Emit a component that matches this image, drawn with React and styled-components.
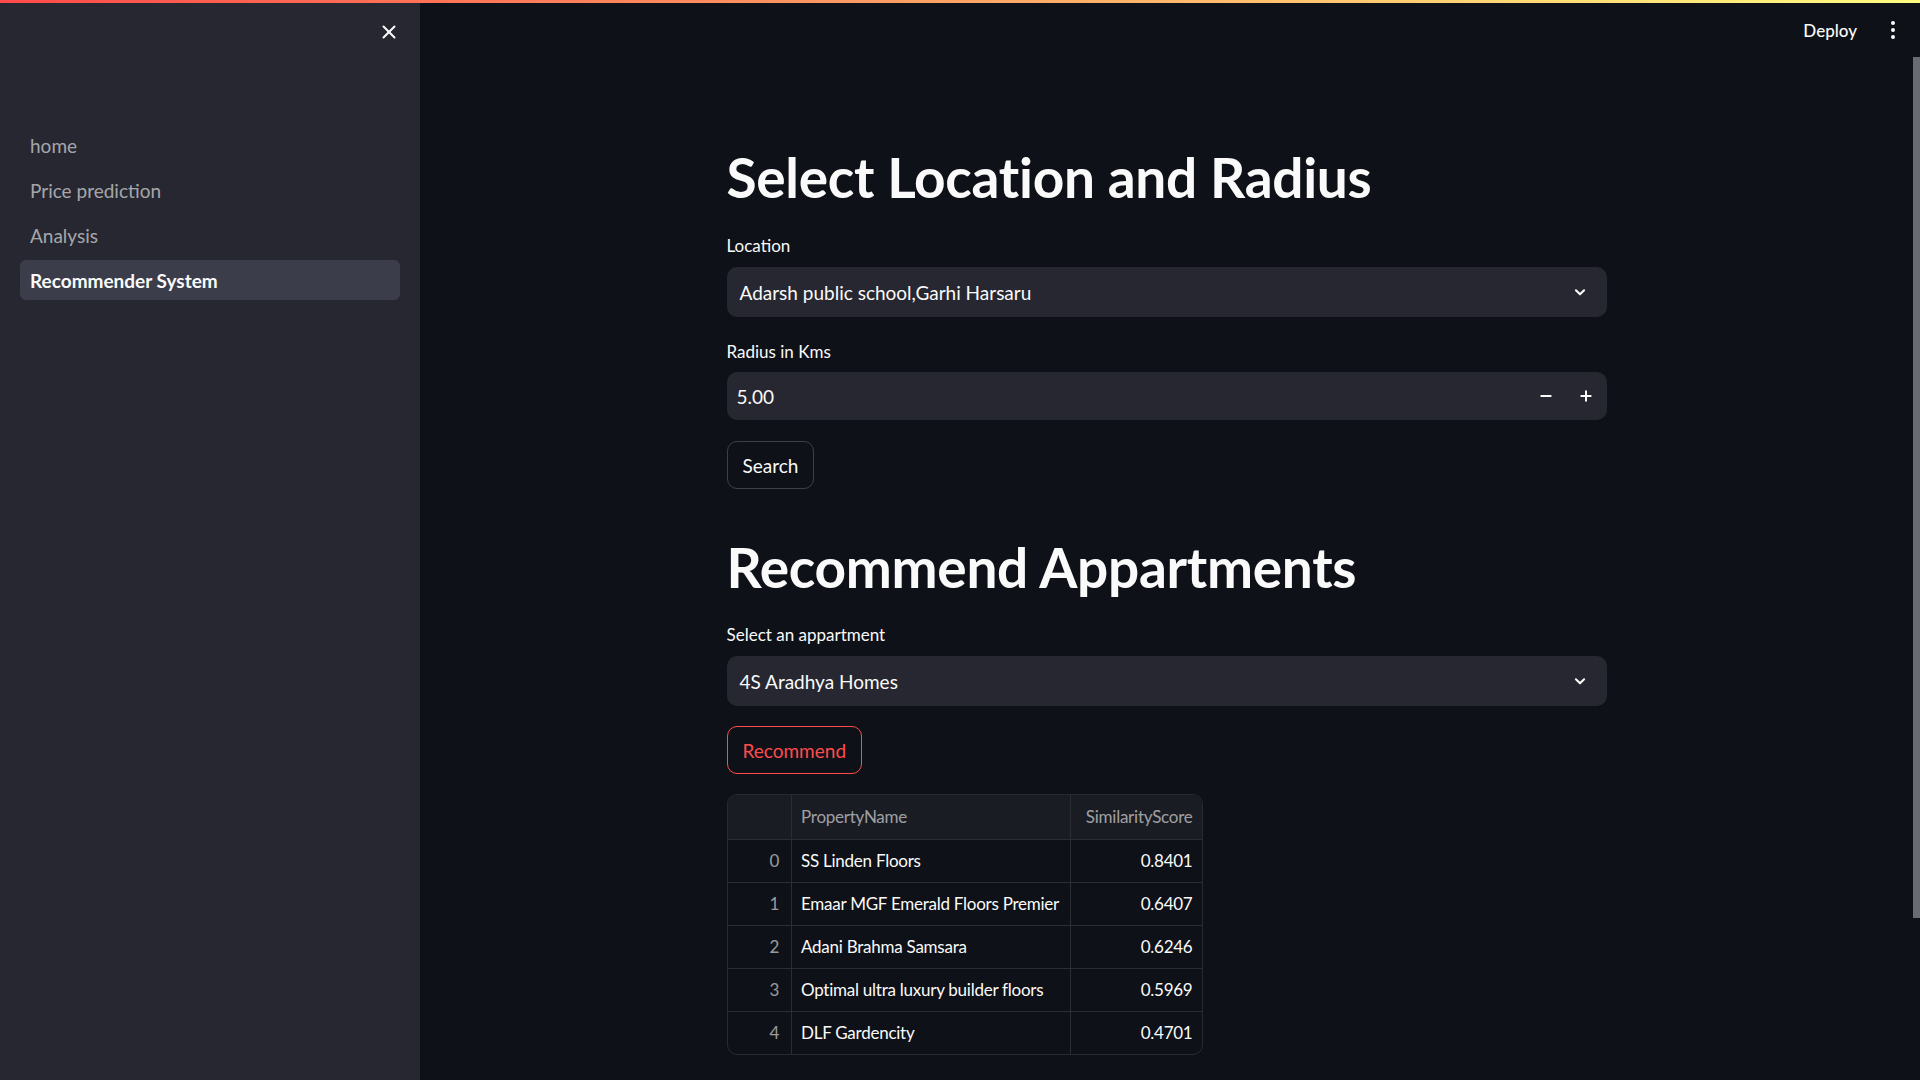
import React from 'react';
import styled, { createGlobalStyle } from 'styled-components';
import { X, Minus, Plus } from 'lucide-react';

const GlobalStyle = createGlobalStyle`
  html, body {
    margin: 0;
    padding: 0;
    background: #0e1117;
    color: #fafafa;
    font-family: "Lato", "Noto Sans", sans-serif;
  }
  * { box-sizing: border-box; }
`;

const Page = styled.div`
  position: relative;
  display: flex;
  width: 100%;
  height: 100vh;
  overflow: hidden;
`;

const Decoration = styled.div`
  position: absolute;
  top: 0;
  left: 0;
  right: 0;
  height: 3px;
  background: linear-gradient(90deg, #ff4b4b, #fffd80);
  z-index: 5;
`;

const Sidebar = styled.aside`
  width: 420px;
  flex-shrink: 0;
  background: #262730;
  padding: 0 20px;
`;

const SidebarTop = styled.div`
  height: 125px;
  display: flex;
  justify-content: flex-end;
  align-items: flex-start;
  padding: 21px 0 0 0;
  color: #fafafa;
`;

const NavList = styled.nav`
  display: flex;
  flex-direction: column;
  gap: 5px;
`;

const NavItem = styled.a`
  height: 40px;
  display: flex;
  align-items: center;
  padding-left: 10px;
  border-radius: 6px;
  font-size: 19px;
  font-weight: ${p => (p.active ? 700 : 400)};
  color: ${p => (p.active ? '#fafafa' : 'rgba(250,250,250,0.62)')};
  background: ${p => (p.active ? '#3b3d4a' : 'transparent')};
  cursor: pointer;
`;

const Main = styled.main`
  flex: 1;
  display: flex;
  min-width: 0;
`;

const MainColumn = styled.div`
  flex: 1;
  display: flex;
  flex-direction: column;
`;

const Header = styled.header`
  height: 60px;
  display: flex;
  justify-content: flex-end;
  align-items: center;
  gap: 34px;
  padding: 0 18px 0 0;
`;

const DeployLink = styled.span`
  font-size: 17px;
  font-weight: 500;
  color: #fafafa;
`;

const Dots = styled.div`
  display: flex;
  flex-direction: column;
  gap: 3px;
  span {
    width: 4px;
    height: 4px;
    border-radius: 50%;
    background: #fafafa;
  }
`;

const Block = styled.div`
  width: 920px;
  margin: 0 auto;
  padding: 0 20px;
  display: flex;
  flex-direction: column;
`;

const Title = styled.h1`
  margin: ${p => p.top}px 0 0;
  font-size: 55px;
  font-weight: 700;
  line-height: 66px;
  letter-spacing: -0.3px;
  color: #fafafa;
`;

const Label = styled.label`
  display: block;
  margin-top: ${p => p.top}px;
  font-size: 17px;
  line-height: 22px;
  color: #fafafa;
`;

const SelectBox = styled.div`
  margin-top: 10px;
  height: 50px;
  border-radius: 10px;
  background: #262730;
  display: flex;
  align-items: center;
  justify-content: space-between;
  padding: 0 20px 0 13px;
  font-size: 19px;
  color: #fafafa;
`;

const NumberBox = styled.div`
  margin-top: 9px;
  height: 48px;
  border-radius: 10px;
  background: #262730;
  display: flex;
  align-items: center;
  padding: 0 1px 0 10px;
  font-size: 19px;
`;

const NumberValue = styled.span`
  flex: 1;
`;

const StepButton = styled.span`
  width: 40px;
  height: 100%;
  display: flex;
  align-items: center;
  justify-content: center;
  color: #fafafa;
`;

const Button = styled.button`
  align-self: flex-start;
  margin-top: ${p => p.top}px;
  height: 48px;
  padding: 0 15px;
  border-radius: 10px;
  background: transparent;
  border: 1px solid ${p => (p.primary ? '#ff4b4b' : 'rgba(250,250,250,0.2)')};
  color: ${p => (p.primary ? '#ff4b4b' : '#fafafa')};
  font-family: inherit;
  font-size: 19px;
`;

const TableWrap = styled.div`
  align-self: flex-start;
  margin-top: 20px;
  border: 1px solid #262a33;
  border-radius: 10px;
  overflow: hidden;
`;

const Table = styled.table`
  border-collapse: collapse;
  font-size: 17px;
  letter-spacing: -0.25px;
  white-space: nowrap;
`;

const Th = styled.th`
  height: 44px;
  padding: 0 9px;
  background: #1a1c24;
  font-weight: 400;
  color: rgba(250,250,250,0.6);
  text-align: ${p => p.align || 'left'};
  width: ${p => p.w}px;
  border-left: ${p => (p.first ? 'none' : '1px solid #2b2d36')};
  border-bottom: 1px solid #2b2d36;
`;

const Td = styled.td`
  height: 43px;
  padding: 0 9px 0 9px;
  text-align: ${p => p.align || 'left'};
  color: ${p => (p.muted ? 'rgba(250,250,250,0.6)' : '#fafafa')};
  border-left: ${p => (p.first ? 'none' : '1px solid #2b2d36')};
  border-top: 1px solid #2b2d36;
  padding-right: ${p => (p.first ? 12 : 9)}px;
`;

const ScrollTrack = styled.div`
  width: 7px;
  flex-shrink: 0;
  padding-top: 57px;
`;

const ScrollThumb = styled.div`
  height: 861px;
  background: #6a6b70;
`;

const rows = [
  ['SS Linden Floors', '0.8401'],
  ['Emaar MGF Emerald Floors Premier', '0.6407'],
  ['Adani Brahma Samsara', '0.6246'],
  ['Optimal ultra luxury builder floors', '0.5969'],
  ['DLF Gardencity', '0.4701'],
];

const Chevron = () => (
  <svg width="14" height="14" viewBox="0 0 24 24" fill="none" stroke="#fafafa" strokeWidth="3.5" strokeLinecap="round" strokeLinejoin="round">
    <path d="M5 9l7 7 7-7" />
  </svg>
);

const App = () => {
  return (
    <>
      <GlobalStyle />
      <Page>
        <Decoration />
        <Sidebar>
          <SidebarTop>
            <X size={22} strokeWidth={2.2} />
          </SidebarTop>
          <NavList>
            <NavItem>home</NavItem>
            <NavItem>Price prediction</NavItem>
            <NavItem>Analysis</NavItem>
            <NavItem active>Recommender System</NavItem>
          </NavList>
        </Sidebar>
        <Main>
          <MainColumn>
            <Header>
              <DeployLink>Deploy</DeployLink>
              <Dots><span /><span /><span /></Dots>
            </Header>
            <Block>
              <Title top={84}>Select Location and Radius</Title>
              <Label top={25}>Location</Label>
              <SelectBox>
                <span>Adarsh public school,Garhi Harsaru</span>
                <Chevron />
              </SelectBox>
              <Label top={24}>Radius in Kms</Label>
              <NumberBox>
                <NumberValue>5.00</NumberValue>
                <StepButton><Minus size={16} strokeWidth={3} /></StepButton>
                <StepButton><Plus size={16} strokeWidth={3} /></StepButton>
              </NumberBox>
              <Button top={21}>Search</Button>
              <Title top={45}>Recommend Appartments</Title>
              <Label top={24}>Select an appartment</Label>
              <SelectBox>
                <span>4S Aradhya Homes</span>
                <Chevron />
              </SelectBox>
              <Button top={20} primary>Recommend</Button>
              <TableWrap>
                <Table>
                  <thead>
                    <tr>
                      <Th first w={64}></Th>
                      <Th w={279}>PropertyName</Th>
                      <Th w={131} align="right">SimilarityScore</Th>
                    </tr>
                  </thead>
                  <tbody>
                    {rows.map((r, i) => (
                      <tr key={i}>
                        <Td first muted align="right">{i}</Td>
                        <Td>{r[0]}</Td>
                        <Td align="right">{r[1]}</Td>
                      </tr>
                    ))}
                  </tbody>
                </Table>
              </TableWrap>
            </Block>
          </MainColumn>
          <ScrollTrack>
            <ScrollThumb />
          </ScrollTrack>
        </Main>
      </Page>
    </>
  );
};

export default App;
